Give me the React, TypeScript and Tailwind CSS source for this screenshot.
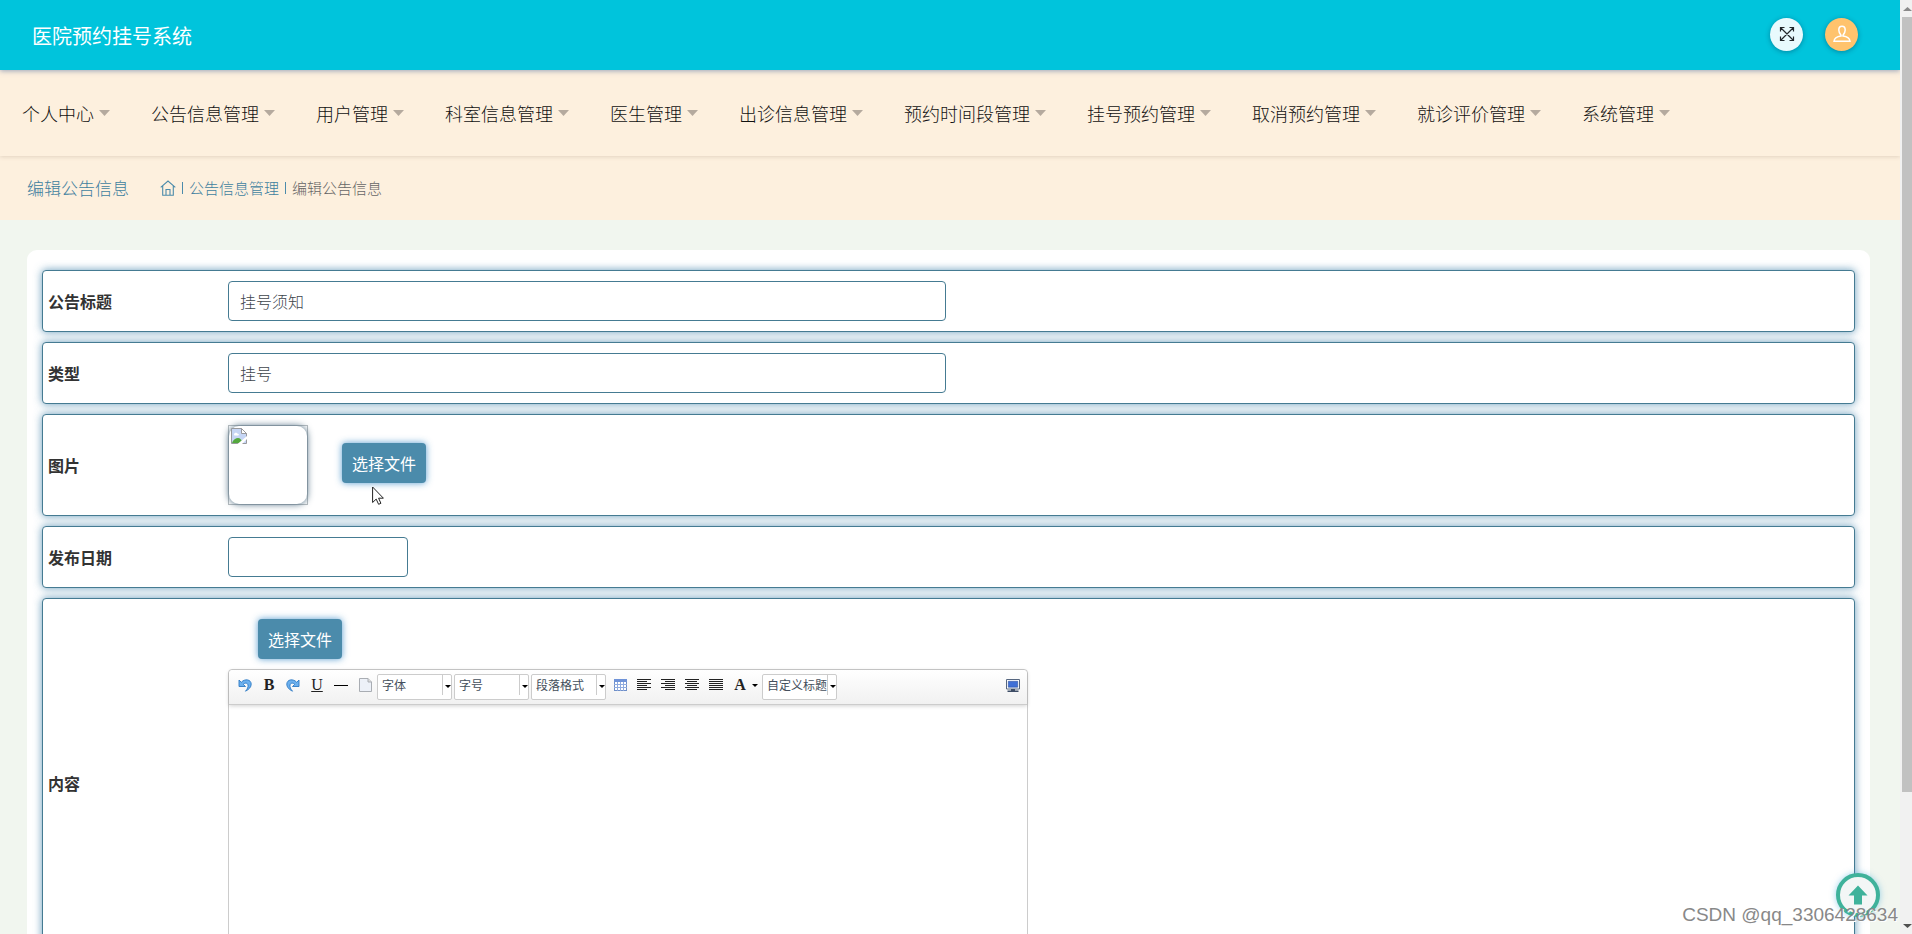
import type { ReactNode } from "react";

const menus = [
  "个人中心",
  "公告信息管理",
  "用户管理",
  "科室信息管理",
  "医生管理",
  "出诊信息管理",
  "预约时间段管理",
  "挂号预约管理",
  "取消预约管理",
  "就诊评价管理",
  "系统管理",
];

function Header() {
  return (
    <header className="relative z-10 flex h-[70px] shrink-0 items-center justify-between bg-[#00c4dc] pr-[42px] pl-8 shadow-[0_1px_5px_rgba(60,90,150,0.5)]">
      <h1 className="pt-[2px] text-xl text-white">医院预约挂号系统</h1>
      <div className="flex gap-[22px] pb-[2px]">
        <button aria-label="全屏" className="flex size-[33px] items-center justify-center rounded-full bg-[#e8fafd] shadow-[0_1px_5px_rgba(0,60,90,0.45)]">
          <svg viewBox="0 0 16 16" className="size-4" fill="none" stroke="#22272b" strokeWidth="1.2">
            <path d="M1.5 1.5l13 13M14.5 1.5l-13 13M1.5 5.500v-4h4M10.500 1.500h4v4M14.500 10.500v4h-4M5.500 14.500h-4v-4" />
          </svg>
        </button>
        <button aria-label="用户" className="flex size-[33px] items-center justify-center rounded-full bg-[#ffc36d] shadow-[0_1px_5px_rgba(0,60,90,0.45)]">
          <svg viewBox="0 0 18 18" className="size-[18px]" fill="none" stroke="#fff" strokeWidth="1.5">
            <path d="M9 1.300c2.200 0 3.200 1.500 3.200 3.700 0 2-.8 3.600-2.200 5.200v.9c3.500.5 6.600 1.500 7 5.200H1c.4-3.700 3.500-4.700 7-5.200v-.9C6.600 8.600 5.800 7 5.800 5 5.800 2.800 6.800 1.300 9 1.300z" />
          </svg>
        </button>
      </div>
    </header>
  );
}

function Nav() {
  return (
    <nav className="relative flex h-[86px] shrink-0 items-center gap-[41px] bg-[#fdf0de] pl-[22px] shadow-[0_1px_4px_rgba(120,100,80,0.2)]">
      {menus.map((m) => (
        <button key={m} className="flex shrink-0 items-center gap-[5px] text-lg font-light whitespace-nowrap text-[#111]">
          {m}
          <svg viewBox="0 0 11 6" className="h-[6px] w-[11px]" fill="#b5aa9e">
            <path d="M0 0h11L5.500 6z" />
          </svg>
        </button>
      ))}
    </nav>
  );
}

function Breadcrumb() {
  return (
    <div className="flex h-16 shrink-0 items-center bg-[#fdf0de] pl-[27px] text-[15px] font-light text-[#3f7f9f]">
      <h2 className="w-[133px] text-[17px]">编辑公告信息</h2>
      <a href="#home" aria-label="首页">
        <svg viewBox="0 0 16 16" className="size-4" fill="none" stroke="#4b8bab" strokeWidth="1.1">
          <path d="M.7 7.300L8 1l7.300 6.300M2.700 6v9.300h10.600V6M6 15V9.500h4V15" />
        </svg>
      </a>
      <span className="mx-[6px] h-3 w-px bg-[#4b8bab]" />
      <a href="#notices">公告信息管理</a>
      <span className="mx-[6px] h-3 w-px bg-[#4b8bab]" />
      <span className="text-[#666]">编辑公告信息</span>
    </div>
  );
}

function Row({ label, htmlFor, children }: { label: string; htmlFor: string; children: ReactNode }) {
  return (
    <div className="flex items-center rounded border border-[#457b92] bg-white py-[10px] pl-[5px] shadow-[0_0_8px_rgba(65,130,170,0.8)]">
      <label htmlFor={htmlFor} className="w-[180px] shrink-0 text-base font-bold text-[#333]">
        {label}
      </label>
      {children}
    </div>
  );
}

function FileButton({ id }: { id: string }) {
  return (
    <button id={id} className="h-10 rounded bg-[#4b8bab] px-[10px] text-base text-white shadow-[0_0_7px_rgba(60,140,200,0.85)]">
      选择文件
    </button>
  );
}

function BrokenImage() {
  return (
    <div className="size-20 border border-[#b9bec1]">
      <div className="size-full rounded-[10px] pt-[2px] pl-[2px] shadow-[0_0_7px_rgba(50,85,110,0.9)]">
        <svg viewBox="0 0 16 16" className="size-4" role="img" aria-label="图片">
          <path d="M.5.500h10l5 5v10H.5z" fill="#c6d6f5" stroke="#98999c" />
          <path d="M10.500.500v5h5z" fill="#fff" stroke="#98999c" />
          <path d="M3 6.500c0-2 3-2.500 3.500-.8 1.800-.2 1.800 1.800.5 1.800H4C3.400 7.500 3 7 3 6.500z" fill="#fff" />
          <path d="M1 15c1-3.500 4-5 6-5s4 2 5 5z" fill="#54a83e" />
          <path d="M6.500 16l9.500-8v3l-5 5z" fill="#fff" />
        </svg>
      </div>
    </div>
  );
}

function Caret() {
  return (
    <svg viewBox="0 0 6 3" className="h-[3px] w-[6px] shrink-0" fill="#000">
      <path d="M0 0h6L3 3z" />
    </svg>
  );
}

function Combo({ text }: { text: string }) {
  return (
    <button className="flex h-[26px] w-[75px] shrink-0 items-center rounded-[2px] border border-[#ccc] bg-white pl-1 text-xs text-[#444f5c]">
      <span className="mb-1 h-[18px] w-[60px] overflow-hidden text-left leading-[18px] whitespace-nowrap">{text}</span>
      <span className="mb-1 h-5 w-px shrink-0 bg-[#ccc]" />
      <span className="ml-[2px] shrink-0 pb-[2px]">
        <Caret />
      </span>
    </button>
  );
}

function Tool({ label, children }: { label: string; children: ReactNode }) {
  return (
    <button aria-label={label} className="flex h-5 w-6 shrink-0 items-center justify-center font-['Liberation_Serif',serif] text-base font-bold text-[#222]">
      {children}
    </button>
  );
}

function CurvedArrow({ flip }: { flip?: boolean }) {
  return (
    <svg viewBox="0 0 14 14" className={flip ? "size-[14px] -scale-x-100" : "size-[14px]"}>
      <path d="M1 2v6.500h6.500L5.300 6.300C7 4.500 9.500 4.800 10 7c.4 2-.6 4-2.500 6.200C11 11.500 13.300 9 13.200 6 13 1.500 7 .2 3.300 4.300z" fill="#6cb0ee" stroke="#2f7ac4" strokeWidth=".9" />
    </svg>
  );
}

function Lines({ d }: { d: string }) {
  return (
    <svg viewBox="0 0 14 12" className="h-3 w-[14px]" stroke="#222" fill="none" shapeRendering="crispEdges">
      <path d={d} />
    </svg>
  );
}

function Editor() {
  return (
    <div className="w-[800px] rounded border border-[#ccc]">
      <div className="flex h-[35px] items-center rounded-t border-b border-[#ccc] bg-linear-to-b from-white to-[#f1f1f1] pl-1 shadow-[0_1px_4px_rgba(0,0,0,0.18)]">
        <div className="flex items-center pb-1">
          <Tool label="撤销"><CurvedArrow /></Tool>
          <Tool label="加粗">B</Tool>
          <Tool label="重做"><CurvedArrow flip /></Tool>
          <Tool label="下划线"><span className="font-normal underline">U</span></Tool>
          <Tool label="分隔线"><span className="h-px w-[14px] bg-black" /></Tool>
          <Tool label="清空文档">
            <svg viewBox="0 0 13 14" className="h-[14px] w-[13px]" fill="#edf1f8" stroke="#a9adb3">
              <path d="M.5.500h8.500l3.500 3.500v9.500H.5z" />
              <path d="M9 .5V4h3.500" fill="#ddd" />
            </svg>
          </Tool>
        </div>
        <div className="flex items-center gap-[2px]">
          <Combo text="字体" />
          <Combo text="字号" />
          <Combo text="段落格式" />
        </div>
        <div className="flex items-center pb-1 pl-[2px]">
          <Tool label="表格">
            <svg viewBox="0 0 13 12" className="h-3 w-[13px]" shapeRendering="crispEdges">
              <path d="M.5.500h12v11H.5z" fill="#fff" stroke="#6f8fc8" />
              <path d="M0 0h13v3H0z" fill="#6f93d8" />
              <path d="M3.500 3v9M6.500 3v9M9.500 3v9M0 5.500h13M0 8.500h13" stroke="#8fabdf" fill="none" />
            </svg>
          </Tool>
          <Tool label="左对齐"><Lines d="M0 .5h14M0 2.500h10M0 4.500h14M0 6.500h10M0 8.500h14M0 10.500h10" /></Tool>
          <Tool label="右对齐"><Lines d="M0 .5h14M4 2.500h10M0 4.500h14M4 6.500h10M0 8.500h14M4 10.500h10" /></Tool>
          <Tool label="居中"><Lines d="M0 .5h14M2 2.500h10M0 4.500h14M2 6.500h10M0 8.500h14M2 10.500h10" /></Tool>
          <Tool label="两端对齐"><Lines d="M0 .5h14M0 2.500h14M0 4.500h14M0 6.500h14M0 8.500h14M0 10.500h14" /></Tool>
          <Tool label="文字颜色">A</Tool>
          <Caret />
        </div>
        <div className="pl-1">
          <Combo text="自定义标题" />
        </div>
        <div className="ml-auto pr-[2px] pb-1">
          <Tool label="全屏编辑">
            <svg viewBox="0 0 14 13" className="h-[13px] w-[14px]">
              <path d="M.5.500h13v9.500H.5z" fill="#fff" stroke="#56667f" />
              <path d="M2.300 2.300h9.400v5.900H2.300z" fill="#3f6fd6" stroke="#2a4f9e" strokeWidth=".6" />
              <path d="M5 10h4v1.500h3.500V13h-11v-1.500H5z" fill="#3d4d66" />
            </svg>
          </Tool>
        </div>
      </div>
      <div id="content" contentEditable aria-label="内容" className="h-[251px] outline-none" />
    </div>
  );
}

const inputClass = "h-10 rounded border border-[#457b92] bg-white px-[11px] text-base font-light text-[#40464c] outline-none";

export default function App() {
  return (
    <div className="relative flex h-screen overflow-hidden bg-[#f1f6ef] font-['Noto_Sans_CJK_SC',sans-serif]">
      <div className="flex min-w-0 flex-1 flex-col overflow-y-auto [scrollbar-width:none]">
        <Header />
        <Nav />
        <Breadcrumb />
        <main className="mt-[30px] mr-[30px] mb-[30px] ml-[27px] shrink-0 rounded-[10px] bg-white px-[15px] py-5">
          <form className="flex flex-col gap-[10px]" onSubmit={(e) => e.preventDefault()}>
            <Row label="公告标题" htmlFor="title">
              <input id="title" defaultValue="挂号须知" className={inputClass + " w-[718px]"} />
            </Row>
            <Row label="类型" htmlFor="type">
              <input id="type" defaultValue="挂号" className={inputClass + " w-[718px]"} />
            </Row>
            <Row label="图片" htmlFor="picture">
              <div className="flex items-center gap-[34px]">
                <BrokenImage />
                <div className="pb-1">
                  <FileButton id="picture" />
                </div>
              </div>
            </Row>
            <Row label="发布日期" htmlFor="date">
              <input id="date" className={inputClass + " w-[180px]"} />
            </Row>
            <Row label="内容" htmlFor="content-file">
              <div className="pt-[10px]">
                <div className="mb-[10px] pl-[30px]">
                  <FileButton id="content-file" />
                </div>
                <Editor />
              </div>
            </Row>
          </form>
        </main>
      </div>

      <div className="flex w-3 shrink-0 flex-col items-end bg-[#f1f1f1]">
        <svg viewBox="0 0 10 17" className="h-[17px] w-[10px]" fill="#8a8a8a">
          <path d="M1 11h9L5.500 7z" />
        </svg>
        <div className="w-[10px] flex-1 bg-[#c1c1c1]" />
        <div className="flex h-[142px] w-[10px] items-end">
          <svg viewBox="0 0 10 14" className="h-[14px] w-[10px]" fill="#505050">
            <path d="M1 4h9L5.500 8z" />
          </svg>
        </div>
      </div>

      <a href="#top" aria-label="返回顶部" className="absolute right-8 bottom-[17px] flex size-11 items-center justify-center rounded-full border-4 border-[#3fb29b] bg-[#f3f6f6] shadow-[0_0_6px_rgba(60,170,220,0.5)]">
        <svg viewBox="0 0 20 20" className="size-5" fill="#3fb29b">
          <path d="M10 .5l9.500 10H14V19.500H6V10.500H.5z" />
        </svg>
      </a>
      <p className="absolute right-[14px] bottom-[5px] font-['Liberation_Sans',sans-serif] text-[19px] leading-7 text-[#888] [text-shadow:1px_1px_0_#fff]">
        CSDN @qq_3306428634
      </p>
      <svg viewBox="0 0 12 19" className="absolute top-[486px] left-[372px] h-[19px] w-3" fill="#fff" stroke="#222">
        <path d="M.6 1v15.500l3.600-3.400 2.400 5.200 2.300-1-2.300-5.100h4.800z" />
      </svg>
    </div>
  );
}
